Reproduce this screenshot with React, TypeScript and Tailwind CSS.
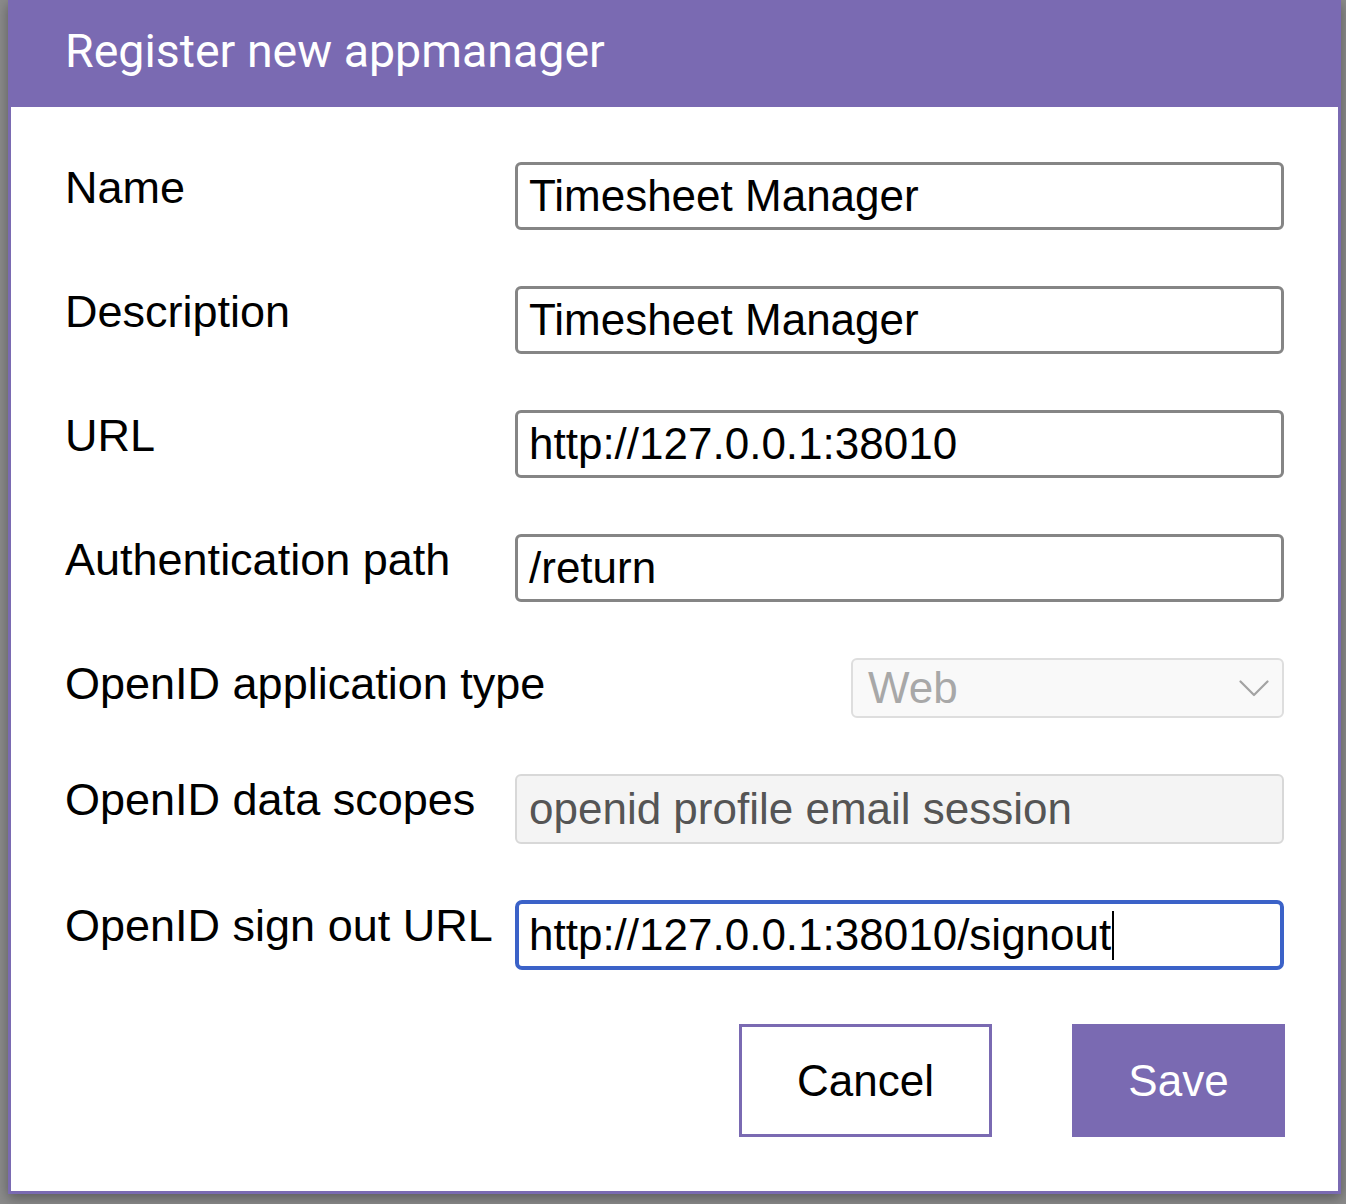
const fields = [
  { label: "Name", value: "Timesheet Manager" },
  { label: "Description", value: "Timesheet Manager" },
  { label: "URL", value: "http://127.0.0.1:38010" },
  { label: "Authentication path", value: "/return" },
];

const App = () => {
  return (
    <div className="w-[1346px] h-[1204px] overflow-hidden bg-[#8b8b8b] pl-[8px] pr-[5px] pb-[10px]">
      <div className="flex h-full flex-col border-[3px] border-t-0 border-[#7a6ab2] bg-white shadow-[0_4px_12px_rgba(0,0,0,0.35)]">
        {/* Header */}
        <div className="flex h-[107px] shrink-0 items-center bg-[#7a6ab2] px-[54px] pb-[4px]">
          <h1 className="font-['Roboto',sans-serif] text-[46.5px] font-normal leading-none text-white">
            Register new appmanager
          </h1>
        </div>

        {/* Form */}
        <div className="flex flex-1 flex-col px-[54px] pt-[55px] font-['Liberation_Sans',Arial,sans-serif]">
          <div className="flex flex-col gap-[56px]">
            {fields.map(({ label, value }) => (
              <div key={label} className="flex items-start">
                <label className="w-[450px] shrink-0 whitespace-nowrap text-[45px] leading-[52px] text-black">
                  {label}
                </label>
                <div className="flex h-[68px] flex-1 items-center rounded-[6px] border-[3px] border-[#858585] bg-white px-[11px] text-[44px] text-black">
                  {value}
                </div>
              </div>
            ))}

            <div className="flex items-start">
              <label className="w-[450px] shrink-0 whitespace-nowrap text-[45px] leading-[52px] text-black">
                OpenID application type
              </label>
              <div className="flex flex-1 justify-end">
                <div className="flex h-[60px] w-[433px] items-center justify-between rounded-[6px] border-2 border-[#dedede] bg-[#f9f9f9] pl-[15px] pr-[13px] text-[44px] text-[#a8a8a8]">
                  <span>Web</span>
                  <svg width="30" height="17" viewBox="0 0 30 17" fill="none" aria-hidden="true">
                    <polyline points="1.5,1.5 15,15 28.5,1.5" stroke="#a3a3a3" strokeWidth="2.2" strokeLinecap="round" strokeLinejoin="round" />
                  </svg>
                </div>
              </div>
            </div>

            <div className="flex items-start">
              <label className="w-[450px] shrink-0 whitespace-nowrap text-[45px] leading-[52px] text-black">
                OpenID data scopes
              </label>
              <div className="flex h-[70px] flex-1 items-center rounded-[6px] border-2 border-[#d8d8d8] bg-[#f4f4f4] px-[12px] text-[44px] text-[#555555]">
                openid profile email session
              </div>
            </div>

            <div className="flex items-start">
              <label className="w-[450px] shrink-0 whitespace-nowrap text-[45px] leading-[52px] text-black">
                OpenID sign out URL
              </label>
              <div className="flex h-[70px] flex-1 items-center rounded-[7px] border-[4px] border-[#3b62c8] bg-white px-[10px] text-[44px] text-black">
                <span>http://127.0.0.1:38010/signout</span>
                <span className="ml-[1px] h-[49px] w-[2px] bg-black" />
              </div>
            </div>
          </div>

          {/* Actions */}
          <div className="mt-[54px] flex justify-end gap-[80px]">
            <button className="flex h-[113px] w-[253px] items-center justify-center border-[3px] border-[#7a6ab2] bg-white text-[44px] text-black">
              Cancel
            </button>
            <button className="mr-[-1px] flex h-[113px] w-[213px] items-center justify-center bg-[#7a6ab2] text-[44px] text-white">
              Save
            </button>
          </div>
        </div>
      </div>
    </div>
  );
};

export default App;
